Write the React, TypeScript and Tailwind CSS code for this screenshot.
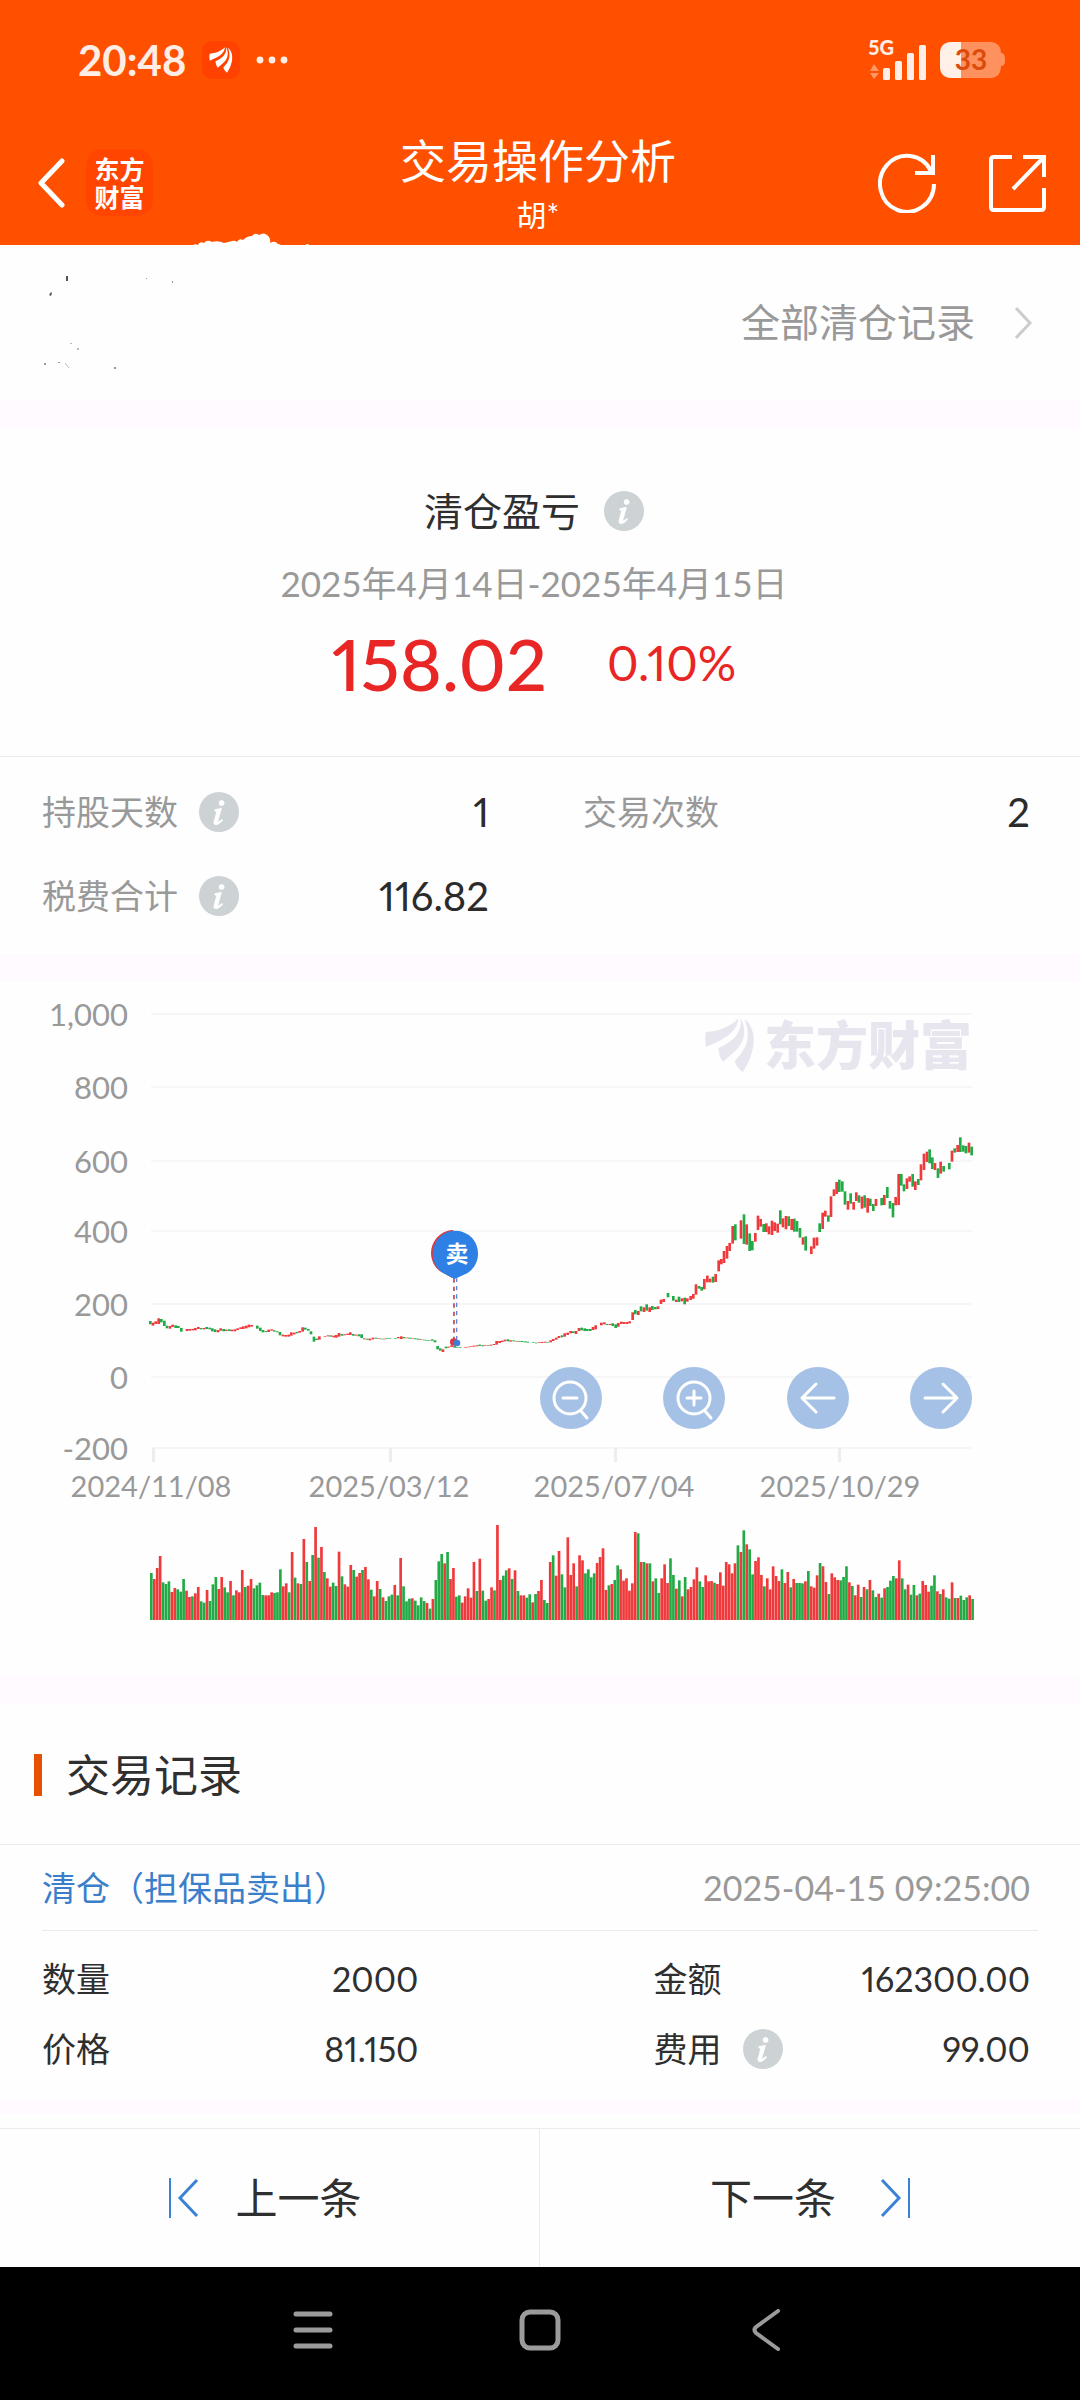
import type { ReactNode } from "react";

const RED = "#f0393b";
const GREEN = "#22aa46";

type Bar = { color: string; x: number; top: number; bottom: number };

// "r 56 325 342" = colour, centre, high, low (three units per pixel)
const parseCandles = (src: string): Bar[] =>
  src.split(";").map((item) => {
    const [c, x, top, bottom] = item.trim().split(" ");
    return { color: c === "r" ? RED : GREEN, x: Number(x), top: Number(top), bottom: Number(bottom) };
  });

const flatCandles = parseCandles(
  "g 31 333 343;r 39 338 347;r 47 334 342;r 56 325 342;g 64 327 337;g 73 332 348;g 81 347 355;r 90 348 356;r 98 344 351;g 107 346 354;g 115 348 354;g 124 354 365;r 141 357 363;r 149 357 362;r 158 357 361;r 166 354 361;r 175 351 357;g 183 354 358;r 192 354 358;g 200 351 357;g 209 353 358;g 217 355 364;g 225 358 366;r 234 360 367;r 242 355 362;g 251 357 364;r 259 359 363;g 268 358 363;r 276 359 364;r 285 358 364;r 293 355 360;r 302 352 357;r 310 349 357;r 319 347 355;r 327 344 352;r 335 345 350;g 352 347 356;g 361 353 363;g 369 360 367;g 378 363 366;r 386 359 366;r 395 358 362;g 403 361 365;g 412 364 367;g 420 366 376;r 429 374 379;r 437 375 380;r 446 374 380;r 454 367 377;r 463 368 373;g 471 366 370;r 479 363 368;r 488 352 365;g 496 353 359;g 505 357 362;g 513 364 373;g 522 380 395;g 530 386 390;r 538 379 389;r 555 378 380;r 564 376 379;g 572 376 380;r 581 377 382;r 589 375 383;r 597 369 380;g 606 372 377;r 614 373 376;r 623 371 375;r 631 367 375;g 640 372 377;r 648 374 377;g 657 373 379;g 665 373 384;r 673 385 388;g 682 386 389;r 690 386 391;r 699 383 388;g 708 383 386;r 716 385 387;g 724 386 388;r 733 386 388;g 741 385 387;g 750 385 387;g 766 385 387;r 775 381 385;r 784 379 387;g 792 381 385;r 801 383 385;g 809 383 386;r 817 384 386;g 826 385 388;g 835 386 389;r 843 388 390;g 852 389 391;g 860 390 392;g 868 390 392;g 877 388 392;g 885 391 397;g 893 408 418;g 901 415 422;r 909 418 426;g 918 410 415;r 926 410 413;r 935 406 411;g 944 408 413;g 952 411 413;g 961 412 414;r 977 411 413;r 986 410 412;r 994 409 411;r 1002 407 410;r 1011 406 409;g 1019 404 408;g 1028 406 409;r 1036 405 407;g 1045 406 408;r 1053 404 407;r 1062 402 405;r 1070 393 404;r 1079 393 399;r 1087 392 396;r 1095 389 394;g 1104 388 394;r 1112 391 395;g 1121 391 394;r 1130 393 395;g 1138 393 395;g 1146 393 396;g 1155 394 397;g 1163 395 398;g 1180 397 399;g 1189 398 400;r 1198 396 398;r 1206 396 399;r 1215 395 398;g 1223 396 398;r 1232 391 397;r 1240 387 393;r 1249 383 389;r 1257 378 384"
);

const rallyCandles = parseCandles(
  "g -384 646 652;r -376 640 650;r -367 638 645;r -358 633 640;g -350 634 639;r -342 633 642;r -333 624 633;g -325 623 631;g -316 625 633;g -308 627 633;g -299 627 633;r -291 621 630;r -283 616 628;r -266 608 616;r -257 607 613;g -249 612 615;r -240 612 615;g -232 610 618;g -223 613 624;r -215 609 620;r -206 605 612;r -198 606 612;r -189 606 612;r -181 604 610;r -172 577 600;g -164 570 583;r -155 573 585;g -147 559 574;r -138 562 576;g -130 553 572;r -121 562 576;g -113 558 570;g -104 561 568;r -96 559 567;r -87 539 552;r -79 537 546;g -66 519 532;g -50 528 542;r -41 539 546;g -33 530 546;r -24 535 544;g -16 533 553;r -8 535 545;r 2 528 540;r 10 522 536;r 18 493 524;g 27 498 506;g 35 501 512;r 43 477 508;r 52 467 487;r 60 476 487;g 69 470 488;r 77 462 486;r 86 421 454;r 94 417 433;r 102 393 429;r 111 378 416;r 119 369 393;r 128 318 371;g 136 313 361;r 153 301 356;g 162 283 372;r 170 313 374;g 179 340 393;g 187 363 391;r 196 339 365;r 204 287 330;r 212 297 320;g 221 312 336;r 229 310 336;r 237 319 343;r 246 302 345;r 254 307 333;r 263 311 338;g 271 271 313;r 279 295 322;r 288 288 328;g 296 289 318;r 305 297 330;g 313 296 335;g 321 303 335;g 330 324 353;r 339 352 374;g 347 349 392;r 364 379 402;r 372 353 386;r 381 352 377;g 389 310 336;r 398 278 327;r 406 272 290;g 415 286 305;r 423 229 291;r 432 208 228;r 440 186 222;g 448 179 216;g 457 184 215;g 465 214 254;r 474 243 269;g 482 220 251;r 491 246 269;r 499 217 243;g 507 226 248;r 516 230 266;g 524 226 263;r 533 234 278;g 541 236 258;g 550 252 273;r 558 237 258;g 575 234 256;r 583 225 255;g 592 201 234;g 600 243 266;g 609 249 292;r 617 231 256;r 626 162 255;g 634 162 197;g 642 193 214;r 651 175 207;r 659 169 185;g 668 162 200;r 676 184 210;g 685 177 195;r 693 133 181;r 702 101 150;r 711 95 126;g 719 88 130;g 727 112 147;r 735 129 150;g 744 145 174;r 752 125 161;g 761 138 155;g 778 129 148;r 786 92 125;g 794 85 98;r 803 75 96;g 811 52 96;g 820 76 95;g 828 78 100;r 837 68 98;g 845 80 106"
);

const volumes: Bar[] = (
  "g219 r237 r204 r168 g247 g252 g244 r276 r264 g268 g275 g237 r272 r291 g289 r280 r261 g304 g308 r270 " +
  "g303 g253 g231 r267 r231 g262 g277 r243 g286 r271 r277 r210 g261 r257 r237 g265 g256 g248 g285 r286 " +
  "r286 r277 g279 g277 g208 r259 r250 g277 r156 g233 r250 g252 r117 g186 r243 g165 r81 g173 r141 g216 " +
  "r235 r260 g248 g258 r155 g229 r253 r260 r195 g210 r230 r219 g210 r201 r238 g269 r289 r243 g267 r292 " +
  "g303 g289 g284 r255 g286 r174 g259 g304 g296 r295 g302 g316 g292 g303 r309 g326 r297 g240 g184 g162 " +
  "r190 g156 r237 r204 g290 g286 r308 r289 r265 r293 r186 g273 r176 g272 g302 r297 r262 g271 r75 r240 " +
  "g227 g211 r205 g237 r211 g273 r286 r286 g293 g283 r307 g282 r273 r240 g300 g309 r186 g166 r227 r153 " +
  "g223 g262 r112 r225 r190 g259 r166 r181 g220 g208 g232 g220 r189 r171 r145 r270 g256 r252 g240 g196 " +
  "r208 r242 r235 r272 r250 r96 g100 r186 g186 r190 g190 r244 g235 g279 r235 r193 r249 g175 g225 r266 " +
  "g241 r289 g231 r268 r261 r238 r202 g244 g261 r226 r244 r243 g248 r252 r217 r257 r186 r193 r220 r190 " +
  "g136 r156 g91 r133 g148 g223 r183 r172 r225 g259 r235 r268 r199 r228 r243 g208 r249 r216 g262 r237 " +
  "g249 g249 g250 r244 g213 r259 r263 r226 g189 r199 r246 g282 r220 r232 r240 g241 g231 g199 r247 g258 " +
  "r286 r254 g291 r261 g268 r240 g271 g291 r281 g293 r265 g261 g242 g228 r235 r181 g235 g268 r254 g284 " +
  "g255 r286 g281 r243 r255 r275 g257 g226 r274 g282 r268 g292 g296 r247 g294 r294 g287 g300 g292 r286 g297"
)
  .split(" ")
  .map((v, i) => ({ color: v[0] === "r" ? RED : GREEN, x: 34 + i * 8.8, top: Number(v.slice(1)), bottom: 360 }));

const yAxis = [
  { label: "1,000", y: 32 },
  { label: "800", y: 105 },
  { label: "600", y: 179 },
  { label: "400", y: 249 },
  { label: "200", y: 322 },
  { label: "0", y: 395 },
  { label: "-200", y: 466 },
];

const xAxis = [
  { label: "2024/11/08", tick: 153, x: 151 },
  { label: "2025/03/12", tick: 390, x: 389 },
  { label: "2025/07/04", tick: 615, x: 614 },
  { label: "2025/10/29", tick: 839, x: 840 },
];

function Bars({ bars }: { bars: Bar[] }) {
  return (
    <>
      {bars.map((b) => (
        <rect key={b.x} x={b.x - 4} y={b.top} width={8} height={b.bottom - b.top} fill={b.color} />
      ))}
    </>
  );
}

function Blades() {
  return (
    <>
      <path d="M482 152 C522 148 552 136 577 112 C571 156 534 172 483 195 C480 180 479 166 482 152 Z" />
      <path d="M583 111 C590 152 560 180 518 198 C520 214 524 228 532 238 C566 208 602 186 592 134 C590 124 587 116 583 111 Z" />
      <path d="M594 113 C630 140 632 205 589 268 C578 258 570 250 566 236 C596 206 618 170 594 113 Z" />
    </>
  );
}

function InfoButton({ label }: { label: string }) {
  return (
    <button type="button" aria-label={label} className="shrink-0">
      <svg viewBox="0 0 40 40" className="size-10">
        <circle cx="20" cy="20" r="20" fill="#cdd2d5" />
        <g fill="#fff" stroke="#fff" strokeWidth="0.8">
          <circle cx="22.600" cy="11" r="2.500" />
          <path d="M16 17.6 L22.4 16.4 L18.8 29 C18.6 30.4 20 30.2 22.8 27.4 L23.6 28.2 C20.8 32.4 14.2 35 15 29.8 L17.8 19.4 L15.6 18.8 Z" />
        </g>
      </svg>
    </button>
  );
}

function Stat({ label, value, info }: { label: string; value?: string; info?: boolean }) {
  return (
    <div className="flex h-[84px] items-center">
      <dt className="flex items-center gap-[21px] text-[34px] text-[#999]">
        {label}
        {info && <InfoButton label={`${label}说明`} />}
      </dt>
      <dd className="ml-auto text-[40px] text-[#2b2b2b] proportional-nums">{value}</dd>
    </div>
  );
}

function RecordItem({ label, value, info }: { label: string; value: string; info?: boolean }) {
  return (
    <div className="flex h-[70px] items-center text-[34px] text-[#2f2f2f]">
      <dt className="flex items-center gap-[21px]">
        {label}
        {info && <InfoButton label={`${label}说明`} />}
      </dt>
      <dd className="ml-auto proportional-nums">{value}</dd>
    </div>
  );
}

function ChartButton({ label, children }: { label: string; children: ReactNode }) {
  return (
    <button type="button" aria-label={label} className="rounded-full bg-[#a5c2e6]">
      <svg viewBox="0 0 62 62" className="size-[62px]" fill="none" stroke="#fff" strokeWidth="3" strokeLinecap="round" strokeLinejoin="round">
        {children}
      </svg>
    </button>
  );
}

function PriceChart() {
  return (
    <section className="relative">
      <svg viewBox="0 0 1080 695" className="block w-full">
        <g fill="#f6f6f7">
          {yAxis.map((t) => (
            <rect key={t.label} x="151" y={t.y - 1} width="821" height="2" />
          ))}
        </g>
        <g fill="#ededee">
          {xAxis.map((t) => (
            <rect key={t.label} x={t.tick - 1} y="466" width="3" height="14" />
          ))}
        </g>
        <g fill="#999" fontSize="31" textAnchor="end">
          {yAxis.map((t) => (
            <text key={t.label} x="128" y={t.y + 12}>{t.label}</text>
          ))}
        </g>
        <g fill="#999" fontSize="29" textAnchor="middle">
          {xAxis.map((t) => (
            <text key={t.label} x={t.x} y="515">{t.label}</text>
          ))}
        </g>

        {/* brand watermark */}
        <g fill="#e7e6ef">
          <g transform="translate(540 -2) scale(0.344)">
            <Blades />
          </g>
          <text x="764" y="83" fontSize="52" fontWeight="900">东方财富</text>
        </g>

        <g transform="translate(140 228) scale(0.3333)">
          <Bars bars={flatCandles} />
        </g>
        <g transform="translate(690 138) scale(0.3333)">
          <Bars bars={rallyCandles} />
        </g>
        <g transform="translate(140 518) scale(0.3333)">
          <Bars bars={volumes} />
        </g>

        {/* buy marker sits behind the sell marker */}
        <g transform="translate(140 228) scale(0.3333)">
          <path d="M942 205 V390" stroke="#c9414b" strokeWidth="5" strokeDasharray="13 12" />
          <path d="M950 205 V390" stroke="#5a86d6" strokeWidth="4" strokeDasharray="13 12" strokeDashoffset="2" />
          <circle cx="941" cy="396" r="11" fill="#d93a44" />
          <circle cx="951" cy="399" r="10" fill="#3d7fd6" />
          <path d="M940 60 a69 69 0 0 0 -42 122 L938 205 Z" fill="#d93a44" />
          <path d="M947 62 a68 69 0 0 1 36 127 L944 207 L908 188 A68 69 0 0 1 947 62 Z" fill="#2f80e4" />
        </g>
        <text x="457" y="280" fill="#fff" fontSize="23" fontWeight="700" textAnchor="middle">卖</text>
      </svg>

      <div className="absolute top-[385px] right-[10%] left-1/2 flex justify-between">
        <ChartButton label="缩小">
          <circle cx="30" cy="31" r="16" />
          <path d="M23 31 H37 M41 44 L47 51" />
        </ChartButton>
        <ChartButton label="放大">
          <circle cx="31" cy="31" r="16" />
          <path d="M24 31 H38 M31 24 V38 M42 44 L48 51" />
        </ChartButton>
        <ChartButton label="向左">
          <path d="M47 31 H15 M29 17 L15 31 L29 45" />
        </ChartButton>
        <ChartButton label="向右">
          <path d="M15 31 H47 M33 17 L47 31 L33 45" />
        </ChartButton>
      </div>
    </section>
  );
}

function StatusBar() {
  return (
    <div className="flex h-[120px] items-center pr-[74px] pl-[78px] text-[#ffeee6]">
      <span className="text-[42px] font-bold">20:48</span>
      <span className="ml-4 flex size-[38px] items-center justify-center rounded-[10px] bg-[#ff4200]">
        <svg viewBox="478 110 148 160" className="h-[26px] w-6" fill="#fff">
          <Blades />
        </svg>
      </span>
      <svg viewBox="0 0 32 8" className="ml-4 h-2 w-8" fill="currentColor">
        <circle cx="4" cy="4" r="3.400" />
        <circle cx="16" cy="4" r="3.400" />
        <circle cx="28" cy="4" r="3.400" />
      </svg>
      <svg viewBox="0 0 62 56" className="mr-3 ml-auto h-14 w-[62px]" fill="currentColor">
        <text x="2" y="23" fontSize="20" fontWeight="900">5G</text>
        <path d="M4 39 L8 32 L13 39 Z M4 41 L8 47 L13 41 Z" opacity="0.45" />
        <rect x="17" y="36" width="7" height="12" rx="1.500" />
        <rect x="29" y="29" width="7" height="19" rx="1.500" />
        <rect x="41" y="21" width="7" height="27" rx="1.500" />
        <rect x="53" y="13" width="7" height="35" rx="1.500" />
      </svg>
      <svg viewBox="0 0 66 36" className="h-9 w-[66px]">
        <path d="M12 0 H50 C57 0 61 4 61 11 C64 11 65 13 65 18 C65 22 64 24 61 24 C61 32 57 36 50 36 H12 C4 36 0 32 0 24 V12 C0 4 4 0 12 0 Z" fill="#ff915e" />
        <path d="M12 0 H21 V36 H12 C4 36 0 32 0 24 V12 C0 4 4 0 12 0 Z" fill="#fff0e8" />
        <text x="31" y="28" fill="#dc4a0c" fontSize="28" fontWeight="700" textAnchor="middle">33</text>
      </svg>
    </div>
  );
}

function Divider() {
  return <div className="h-px bg-[#ebebeb]" />;
}

export default function App() {
  return (
    <div className="min-h-screen bg-[#fefefe] font-['Lato','Noto_Sans_CJK_SC',sans-serif] leading-none text-[#2f2f2f]">
      <header className="bg-[#ff5000] text-white">
        <StatusBar />
        <div className="grid h-[125px] grid-cols-[1fr_auto_1fr] items-center px-[34px]">
          <div className="flex items-center gap-5 pl-1">
            <button type="button" aria-label="返回">
              <svg viewBox="0 0 28 50" className="h-[50px] w-7" fill="none" stroke="currentColor" strokeWidth="5" strokeLinecap="round" strokeLinejoin="round">
                <path d="M24 3 L3 25 L24 47" />
              </svg>
            </button>
            <a href="#home" className="flex size-[67px] items-center justify-center rounded-2xl bg-[#ff4500] text-[25px] leading-[28px] font-bold">
              <span className="w-[50px] break-all">东方财富</span>
            </a>
          </div>
          <div className="pt-[6px] pr-1 text-center">
            <h1 className="text-[46px] leading-[56px]">交易操作分析</h1>
            <p className="text-[30px] leading-[50px]">胡*</p>
          </div>
          <div className="flex justify-end gap-[53px]">
            <button type="button" aria-label="刷新">
              <svg viewBox="0 0 58 60" className="h-[60px] w-[58px]" fill="none" stroke="currentColor" strokeWidth="4">
                <path d="M56 31 A27 28 0 1 1 53 18" />
                <path d="M55 2 V20 H37" />
              </svg>
            </button>
            <button type="button" aria-label="分享">
              <svg viewBox="0 0 57 60" className="h-[60px] w-[57px]" fill="none" stroke="currentColor" strokeWidth="4">
                <path d="M23 4 H5 Q2 4 2 7 V54 Q2 57 5 57 H52 Q55 57 55 54 V35" />
                <path d="M34 4 H55 V24 M55 4 L24 36" />
              </svg>
            </button>
          </div>
        </div>
      </header>

      <section className="relative flex h-[155px] items-center justify-end pr-12">
        {/* scribbled-out account name */}
        <svg viewBox="0 0 320 180" className="absolute -top-3 left-0 h-[180px] w-80" aria-hidden="true">
          <path d="M192 13 q2 -3 6 -1 q1 -4 6 -2 q3 -4 8 -1 q6 -2 12 1 q5 -1 8 -2 q3 -1 5 1 q2 -4 6 -2 q4 -4 9 -4 q3 -4 7 -1 q5 -3 8 0 q4 3 3 8 q5 -3 8 1 q3 0 4 3 Z M304 13 q4 -4 6 0 Z" fill="#fff" />
          <g fill="#555">
            <rect x="66" y="43" width="2" height="5" />
            <path d="M49 62 l2 -3 l1 1 l-1 3 Z" />
            <rect x="172" y="48" width="1" height="2" opacity="0.6" />
            <rect x="146" y="45" width="1" height="1" opacity="0.6" />
            <rect x="44" y="130" width="2" height="2" opacity="0.6" />
            <rect x="58" y="129" width="2" height="1" opacity="0.6" />
            <rect x="70" y="110" width="2" height="1" opacity="0.4" />
            <rect x="77" y="115" width="2" height="2" opacity="0.4" />
            <path d="M65 130 l4 5" stroke="#bbb" />
            <rect x="114" y="134" width="2" height="2" opacity="0.6" />
          </g>
        </svg>
        <a href="#records" className="flex items-center gap-10 text-[39px] text-[#999]">
          全部清仓记录
          <svg viewBox="0 0 17 34" className="h-[34px] w-[17px]" fill="none" stroke="#ccc" strokeWidth="3">
            <path d="M1 2 L15 17 L1 32" />
          </svg>
        </a>
      </section>

      <div className="h-[29px] bg-[#fffaff]" />

      <section className="pt-[58px] pr-3 pb-[53px] text-center">
        <h2 className="flex items-center justify-center gap-6 text-[39px] leading-[48px]">
          清仓盈亏
          <InfoButton label="清仓盈亏说明" />
        </h2>
        <p className="mt-7 text-[35px] leading-[40px] text-[#999]">2025年4月14日-2025年4月15日</p>
        <p className="mt-5 flex items-center justify-center gap-[60px] leading-[80px] text-[#e92626]">
          <span className="text-[72px] font-medium proportional-nums">158.02</span>
          <span className="text-[48px] proportional-nums">0.10%</span>
        </p>
      </section>

      <Divider />

      <dl className="grid grid-cols-2 gap-x-[94px] pt-[13px] pr-[50px] pb-4 pl-[42px]">
        <Stat label="持股天数" value="1" info />
        <Stat label="交易次数" value="2" />
        <Stat label="税费合计" value="116.82" info />
      </dl>

      <div className="h-7 bg-[#fffaff]" />
      <PriceChart />
      <div className="h-7 bg-[#fffaff]" />

      <section>
        <h2 className="flex h-[139px] items-center gap-6 pl-[34px] text-[44px]">
          <span className="h-[42px] w-2 bg-[#e65100]" />
          交易记录
        </h2>
        <Divider />
        <div className="flex h-[85px] items-center justify-between pr-[50px] pl-[42px] text-[34px]">
          <h3 className="text-[#3b7fcb]">清仓（担保品卖出）</h3>
          <time className="text-[#999]">2025-04-15 09:25:00</time>
        </div>
        <div className="px-[42px]">
          <Divider />
        </div>
        <dl className="grid grid-cols-2 gap-x-[235px] pt-[13px] pr-[50px] pb-[15px] pl-[42px]">
          <RecordItem label="数量" value="2000" />
          <RecordItem label="金额" value="162300.00" />
          <RecordItem label="价格" value="81.150" />
          <RecordItem label="费用" value="99.00" info />
        </dl>
      </section>

      <div className="mb-[14px] h-[15px] bg-[#fffaff]" />
      <Divider />

      <div className="grid h-[138px] grid-cols-2 text-[42px]">
        <button type="button" className="flex items-center justify-center gap-9 border-r border-[#ebebeb] pr-2">
          <svg viewBox="0 0 30 40" className="h-10 w-[30px]" fill="none" stroke="#3b82d6">
            <path d="M1 0 V40" strokeWidth="2" />
            <path d="M28 2 L11 20 L28 38" strokeWidth="3" />
          </svg>
          上一条
        </button>
        <button type="button" className="flex items-center justify-center gap-11">
          下一条
          <svg viewBox="0 0 30 40" className="h-10 w-[30px]" fill="none" stroke="#3b82d6">
            <path d="M29 0 V40" strokeWidth="2" />
            <path d="M2 2 L19 20 L2 38" strokeWidth="3" />
          </svg>
        </button>
      </div>

      <nav className="flex h-[133px] items-center justify-center gap-[186px] bg-black pb-2">
        <button type="button" aria-label="最近任务">
          <svg viewBox="0 0 40 42" className="h-[42px] w-10" stroke="#9b9b9b" strokeWidth="5" strokeLinecap="round">
            <path d="M3 5 H37 M3 21 H37 M3 37 H37" />
          </svg>
        </button>
        <button type="button" aria-label="主屏幕">
          <svg viewBox="0 0 42 42" className="size-[42px]" fill="none" stroke="#9b9b9b" strokeWidth="5">
            <rect x="3" y="3" width="36" height="36" rx="8" />
          </svg>
        </button>
        <button type="button" aria-label="返回上级">
          <svg viewBox="0 0 40 42" className="h-[42px] w-10" fill="none" stroke="#9b9b9b" strokeWidth="4" strokeLinecap="round">
            <path d="M31 2 L9 18 Q6 21 9 24 L31 40" />
          </svg>
        </button>
      </nav>
    </div>
  );
}
